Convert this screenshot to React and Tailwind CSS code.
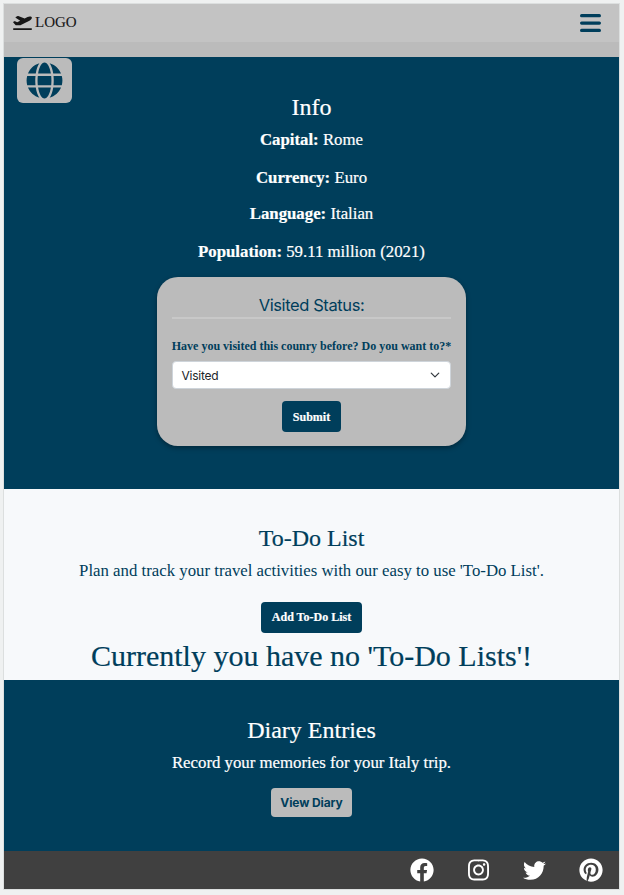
import { FaPlaneDeparture, FaGlobe, FaFacebook, FaInstagram, FaTwitter, FaPinterest } from "react-icons/fa";

function Header() {
  return (
    <header className="h-[53px] bg-[#bbbbbb]">
      <div className="flex h-[38px] items-center justify-between bg-[#c3c3c3] pl-[9px] pr-[18px]">
        <div className="flex items-center gap-[3px] pb-[2px] text-[15px] leading-[20px] text-[#161616] [-webkit-text-stroke:0.1px]">
          <FaPlaneDeparture className="h-[15px] w-[19px]" />
          <span>LOGO</span>
        </div>
        <svg viewBox="0 0 21 18" className="h-[18px] w-[21px] text-[#003e5b]" stroke="currentColor" strokeWidth="3.2" strokeLinecap="round">
          <path d="M1.6 1.7h17.8M1.6 9.1h17.8M1.6 16.4h17.8" />
        </svg>
      </div>
    </header>
  );
}

function Fact({ label, value }) {
  return <p><b>{label}</b> {value}</p>;
}

function Info() {
  return (
    <section className="flex h-[432px] flex-col items-center bg-[#003e5b] text-white">
      <button className="mt-px ml-[13px] flex h-[45px] w-[54.5px] items-center justify-center self-start rounded-[6px] bg-[#bbbbbb] text-[#003e5b]">
        <FaGlobe className="size-[37px]" />
      </button>
      <h2 className="-mt-[11px] text-[24px] leading-[30px] [-webkit-text-stroke:0.2px]">Info</h2>
      <div className="mt-[8px] flex h-[132px] flex-col items-center text-[16.8px] leading-[20px] [-webkit-text-stroke:0.2px]">
        <Fact label="Capital:" value="Rome" />
        <div className="mt-[18px]"><Fact label="Currency:" value="Euro" /></div>
        <div className="mt-[16px]"><Fact label="Language:" value="Italian" /></div>
        <div className="mt-[18px]"><Fact label="Population:" value="59.11 million (2021)" /></div>
      </div>
      <form className="mt-[15px] flex h-[169px] w-[309px] flex-col items-center rounded-[21px] bg-[#bbbbbb] px-[15px] text-[#003e5b] shadow-[0_2px_5px_rgba(0,0,0,0.35)]">
        <h3 className="mt-[17px] h-[25px] w-full border-b-2 border-[#c8c8c8] text-center font-['Inter',sans-serif] text-[16.5px] leading-[23px] tracking-[-0.4px]">Visited Status:</h3>
        <label className="mt-[19px] whitespace-nowrap text-[12px] font-bold leading-[16px]">Have you visited this counry before? Do you want to?*</label>
        <div className="mt-[7px] flex h-[28px] w-full items-center justify-between rounded-[4px] border border-[#ced4da] bg-white pl-[8.5px] pr-[10px] font-['Inter',sans-serif] text-[12px] tracking-[-0.25px] text-[#212529]">
          <span className="pt-[2px]">Visited</span>
          <svg viewBox="0 0 16 16" className="size-[10px]" fill="none" stroke="#343a40" strokeWidth="2" strokeLinecap="round" strokeLinejoin="round"><path d="m2 5 6 6 6-6" /></svg>
        </div>
        <button type="button" className="mt-[12px] h-[31px] w-[59px] rounded-[4px] bg-[#003e5b] text-[12px] font-bold text-white [-webkit-text-stroke:0.2px]">Submit</button>
      </form>
    </section>
  );
}

function TodoList() {
  return (
    <section className="flex h-[191px] flex-col items-center bg-[#f7f9fb] text-[#003e5b]">
      <h2 className="mt-[34px] text-[24px] leading-[30px] [-webkit-text-stroke:0.2px]">To-Do List</h2>
      <p className="mt-[8px] whitespace-nowrap text-[16.8px] leading-[20px]">Plan and track your travel activities with our easy to use 'To-Do List'.</p>
      <button className="mt-[21px] h-[31px] w-[101px] rounded-[4px] bg-[#003e5b] pb-px text-[12px] font-bold text-white [-webkit-text-stroke:0.2px]">Add To-Do List</button>
      <h1 className="mt-[5px] whitespace-nowrap text-[30px] leading-[36px] [-webkit-text-stroke:0.2px]">Currently you have no 'To-Do Lists'!</h1>
    </section>
  );
}

function Diary() {
  return (
    <section className="flex h-[171px] flex-col items-center bg-[#003e5b] text-white">
      <h2 className="mt-[35px] text-[24px] leading-[30px] [-webkit-text-stroke:0.2px]">Diary Entries</h2>
      <p className="mt-[8px] text-[16.8px] leading-[20px] [-webkit-text-stroke:0.2px]">Record your memories for your Italy trip.</p>
      <button className="mt-[15px] h-[29px] w-[81px] rounded-[4px] bg-[#bbbbbb] font-['Inter',sans-serif] text-[12px] font-bold tracking-[-0.1px] text-[#003e5b]">View Diary</button>
    </section>
  );
}

function Footer() {
  return (
    <footer className="flex h-[38px] items-center justify-end bg-[#404040] pr-[16px] text-white">
      <FaFacebook className="size-[24px]" />
      <FaInstagram className="ml-[34px] h-[24px] w-[21px]" />
      <FaTwitter className="ml-[34px] size-[23px]" />
      <FaPinterest className="ml-[33px] h-[24px] w-[24px]" />
    </footer>
  );
}

export default function App() {
  return (
    <div className="h-[895px] w-[624px] bg-[#eff1f1] pl-[4px] pt-[4px] font-['Liberation_Serif',serif]">
      <main className="h-[885px] w-[615px] shadow-[0_0_0_1px_#dcdfdf]">
        <Header />
        <Info />
        <TodoList />
        <Diary />
        <Footer />
      </main>
    </div>
  );
}
